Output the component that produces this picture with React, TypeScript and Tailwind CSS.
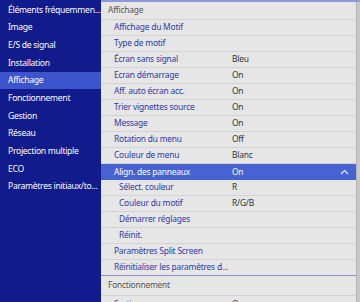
import React from "react";

const leftItems = [
  "Éléments fréquemmen...",
  "Image",
  "E/S de signal",
  "Installation",
  "Affichage",
  "Fonctionnement",
  "Gestion",
  "Réseau",
  "Projection multiple",
  "ECO",
  "Paramètres initiaux/to...",
];

type Row = { label: string; value?: string; sub?: boolean; active?: boolean };

const rows: Row[] = [
  { label: "Affichage du Motif" },
  { label: "Type de motif" },
  { label: "Écran sans signal", value: "Bleu" },
  { label: "Ecran démarrage", value: "On" },
  { label: "Aff. auto écran acc.", value: "On" },
  { label: "Trier vignettes source", value: "On" },
  { label: "Message", value: "On" },
  { label: "Rotation du menu", value: "Off" },
  { label: "Couleur de menu", value: "Blanc" },
  { label: "Align. des panneaux", value: "On", active: true },
  { label: "Sélect. couleur", value: "R", sub: true },
  { label: "Couleur du motif", value: "R/G/B", sub: true },
  { label: "Démarrer réglages", sub: true },
  { label: "Réinit.", sub: true },
  { label: "Paramètres Split Screen" },
  { label: "Réinitialiser les paramètres d..." },
];

const App = () => {
  return (
    <div
      className="flex w-[360px] h-[302px] overflow-hidden leading-none"
      style={{ fontFamily: '"Noto Sans", "Open Sans", sans-serif' }}
    >
      {/* left menu */}
      <div className="w-[101px] shrink-0 bg-[#111b8c] pt-[1px] flex flex-col text-[8.6px] tracking-[-0.3px]">
        {leftItems.map((item) => (
          <div
            key={item}
            className={`h-[17.7px] flex items-center pl-2 whitespace-nowrap text-white ${
              item === "Affichage" ? "bg-[#3c55cc]" : ""
            }`}
          >
            {item}
          </div>
        ))}
      </div>

      {/* right panel */}
      <div className="flex-1 flex bg-[#e6e6e6] border-t-2 border-[#8f98d6] text-[8.4px] tracking-[-0.2px]">
        <div className="flex-1 flex flex-col">
          <div className="h-[18px] flex items-center pl-[7px] text-[#555] border-b border-[#d2d2d2] shrink-0">
            Affichage
          </div>
          {rows.map((r, i) => (
            <div
              key={r.label}
              className={`h-[16px] flex items-center shrink-0 ${
                r.active
                  ? "bg-[#4763d2] text-white"
                  : i === rows.length - 1
                  ? "border-b border-[#8b93cf]"
                  : "border-b border-[#d2d2d2]"
              }`}
            >
              <span
                className={`w-[131px] whitespace-nowrap ${r.sub ? "pl-[18px]" : "pl-[13px]"} ${
                  r.active ? "text-white" : "text-[#2b3aa3]"
                }`}
              >
                {r.label}
              </span>
              <span className={`flex-1 ${r.active ? "text-white" : "text-[#333]"}`}>{r.value}</span>
              {r.active && (
                <svg width="9" height="6" viewBox="0 0 9 6" className="mr-[7px]">
                  <path d="M1 5 L4.5 1.5 L8 5" fill="none" stroke="#e8ecff" strokeWidth="1.2" />
                </svg>
              )}
            </div>
          ))}
          <div className="h-[20px] flex items-center pl-[7px] text-[#555] border-b border-[#d2d2d2] shrink-0">
            Fonctionnement
          </div>
          <div className="h-[16px] flex items-center shrink-0">
            <span className="w-[131px] pl-[13px] text-[#2b3aa3]">Sortie son</span>
            <span className="flex-1 text-[#333]">On</span>
          </div>
        </div>
        <div className="w-[4px] bg-[#c8c8c8] border-l border-[#b4b4b4]" />
      </div>
    </div>
  );
};

export default App;
